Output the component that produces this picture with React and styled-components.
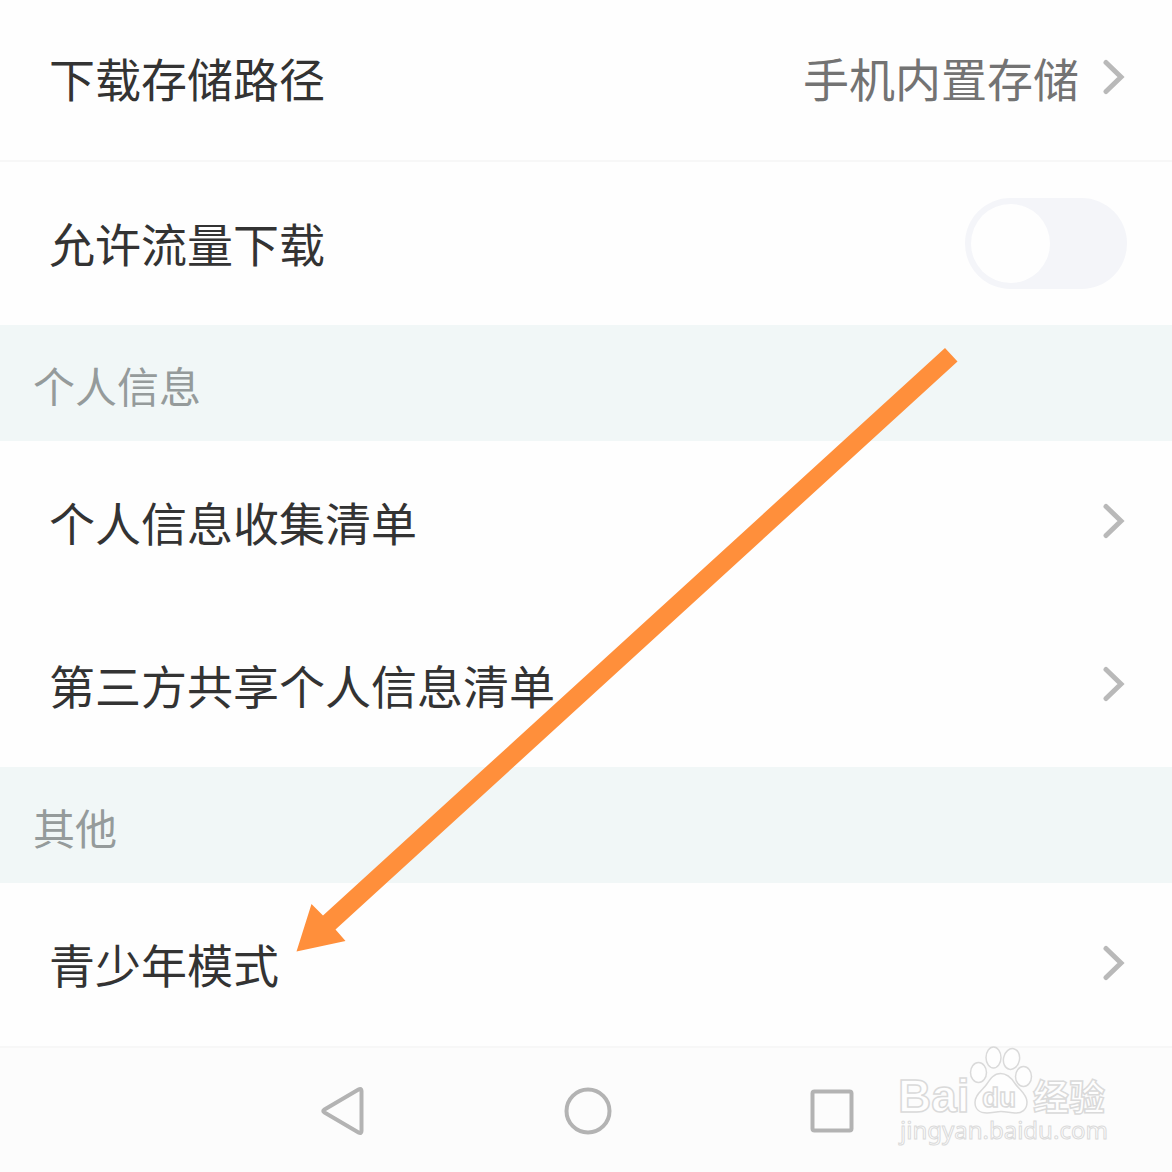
import { useState } from "react";
import styled, { createGlobalStyle } from "styled-components";

const personalRows = ["个人信息收集清单", "第三方共享个人信息清单"];

function Chevron() {
  return (
    <ChevronIcon viewBox="0 0 24 38" aria-hidden="true">
      <path d="M3 4.500 L18 19 L3 33.500" />
    </ChevronIcon>
  );
}

function LinkRow({ label, value, divider }) {
  return (
    <Row as="button" type="button" $divider={divider}>
      <Label>{label}</Label>
      <Side>
        {value && <Value>{value}</Value>}
        <Chevron />
      </Side>
    </Row>
  );
}

function Watermark() {
  return (
    <WatermarkIcon viewBox="0 0 220 110" aria-label="Baidu 经验">
      <text x="3" y="74" fontSize="46" fontWeight="700">Bai</text>
      <ellipse cx="83.500" cy="34.500" rx="8" ry="10" />
      <ellipse cx="98.500" cy="19.500" rx="7.500" ry="10.500" />
      <ellipse cx="116.500" cy="21" rx="8" ry="10.500" transform="rotate(12 116.500 21)" />
      <ellipse cx="128.500" cy="38.500" rx="8" ry="10" />
      <path d="M105.500 35.500c7 0 11 4.500 14.500 10 4 6 12 10.500 12 18.500 0 8-5.500 11.500-12 11-5-.3-9.500-1.500-14-1.500s-9 1.500-14 1.500C84.500 75 80 71 80 64.500c0-8 7-11.500 11.500-18 4-6 7.500-11 14-11z" />
      <text x="87" y="69" fontSize="28" fontWeight="700">du</text>
      <Chinese x="138" y="73" fontSize="36" fontWeight="700">经验</Chinese>
      <Address x="5" y="101" fontSize="24">jingyan.baidu.com</Address>
    </WatermarkIcon>
  );
}

export default function App() {
  const [mobileData, setMobileData] = useState(false);

  return (
    <>
      <GlobalStyle />
      <Page>
        <Settings>
          <LinkRow label="下载存储路径" value="手机内置存储" divider />
          <Row>
            <Label as="label" htmlFor="mobile-data">允许流量下载</Label>
            <Toggle
              id="mobile-data"
              type="checkbox"
              checked={mobileData}
              onChange={(e) => setMobileData(e.target.checked)}
            />
          </Row>
          <SectionTitle>个人信息</SectionTitle>
          {personalRows.map((label) => (
            <LinkRow key={label} label={label} />
          ))}
          <SectionTitle>其他</SectionTitle>
          <LinkRow label="青少年模式" divider />
        </Settings>
        <NavBar>
          <NavButton type="button" aria-label="Back">
            <svg viewBox="0 0 50 50"><path d="M42.500 5v40q0 3-3 1.500L5.500 26.500q-2.500-1.500 0-3L39.500 3.500q3-1.500 3 1.500z" /></svg>
          </NavButton>
          <NavButton type="button" aria-label="Home">
            <svg viewBox="0 0 50 50"><circle cx="25" cy="25" r="21.500" /></svg>
          </NavButton>
          <NavButton type="button" aria-label="Recent apps">
            <svg viewBox="0 0 50 50"><rect x="5.500" y="5.500" width="39" height="39" rx="2" /></svg>
          </NavButton>
        </NavBar>
        <Watermark />
        <Arrow viewBox="0 0 664 608" aria-hidden="true">
          <path d="M0.500 605.500 L15.500 558 L27 569.500 L649 2 L661.500 15.500 L39.500 583.500 L49.500 595 Z" />
        </Arrow>
      </Page>
    </>
  );
}

const GlobalStyle = createGlobalStyle`
  * {
    box-sizing: border-box;
  }

  body {
    margin: 0;
    background: #fefefe;
    font-family: "Noto Sans CJK SC", sans-serif;
  }
`;

const Page = styled.div`
  position: relative;
  display: flex;
  flex-direction: column;
  min-height: 100vh;
  overflow: hidden;
`;

const Settings = styled.main`
  display: flex;
  flex-direction: column;
  margin-top: -3px;
`;

const Row = styled.div`
  display: flex;
  align-items: center;
  justify-content: space-between;
  width: 100%;
  min-height: ${(props) => (props.$divider ? "165px" : "163px")};
  padding: 0 45px 3px 49px;
  border: none;
  border-bottom: ${(props) => (props.$divider ? "2px solid #f7f7f7" : "none")};
  background: #fefefe;
  font-family: inherit;
  text-align: left;
`;

const Label = styled.span`
  font-size: 46px;
  line-height: 64px;
  color: #333333;
`;

const Side = styled.span`
  display: flex;
  align-items: center;
  gap: 24px;
`;

const Value = styled.span`
  font-size: 46px;
  line-height: 64px;
  color: #737373;
`;

const ChevronIcon = styled.svg`
  width: 24px;
  height: 38px;

  path {
    fill: none;
    stroke: #b9b9b9;
    stroke-width: 5;
    stroke-linecap: round;
  }
`;

const Toggle = styled.input`
  appearance: none;
  display: flex;
  align-items: center;
  justify-content: ${(props) => (props.checked ? "flex-end" : "flex-start")};
  width: 162px;
  height: 91px;
  margin: 2px 0 0;
  padding: 0 6px;
  border-radius: 46px;
  background: ${(props) => (props.checked ? "#35c98b" : "#f4f5f9")};

  &::before {
    content: "";
    width: 79px;
    height: 79px;
    border-radius: 50%;
    background: #fefefe;
  }
`;

const SectionTitle = styled.h2`
  display: flex;
  align-items: center;
  min-height: 116px;
  margin: 0;
  padding: 4px 33px 0;
  background: #f1f7f7;
  font-size: 42px;
  font-weight: 400;
  line-height: 60px;
  color: #959b9b;
`;

const NavBar = styled.nav`
  display: flex;
  flex: 1;
  align-items: center;
  justify-content: center;
  gap: 194px;
  min-height: 124px;
  padding: 2px 0 0 4px;
  background: #fcfcfc;
`;

const NavButton = styled.button`
  width: 50px;
  height: 50px;
  padding: 0;
  border: none;
  background: none;

  svg {
    display: block;
    width: 50px;
    height: 50px;
    fill: none;
    stroke: #b3b3b3;
    stroke-width: 4;
  }
`;

const WatermarkIcon = styled.svg`
  position: absolute;
  right: 57px;
  bottom: 24px;
  width: 220px;
  height: 110px;
  fill: #fefefe;
  stroke: #dadada;
  stroke-width: 1.5;
  font-family: "Liberation Sans", sans-serif;
`;

const Chinese = styled.text`
  font-family: "Noto Sans CJK SC", sans-serif;
`;

const Address = styled.text`
  font-family: "Noto Sans", sans-serif;
  stroke-width: 1;
`;

const Arrow = styled.svg`
  position: absolute;
  top: 346px;
  left: 296px;
  width: 664px;
  height: 608px;
  fill: #ff8f3b;
  pointer-events: none;
`;
